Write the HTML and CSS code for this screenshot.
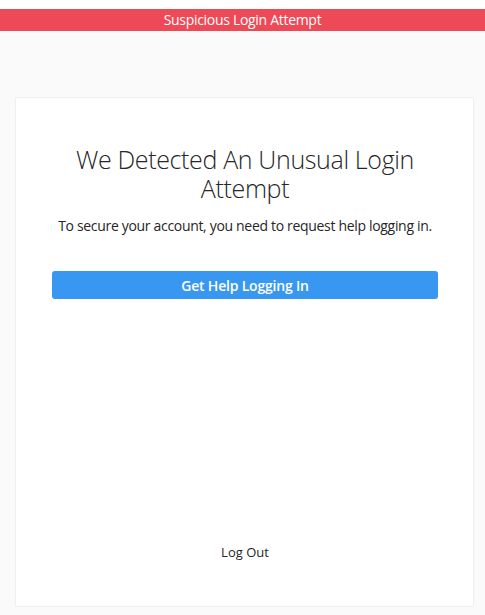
FILE: index.html
```html
<!DOCTYPE html>
<html lang="en">
<head>
<meta charset="utf-8">
<title>Suspicious Login Attempt</title>
<link rel="stylesheet" href="styles.css">
</head>
<body>
<div class="page">
  <header class="alert-bar">Suspicious Login Attempt</header>
  <main class="main">
    <section class="card">
      <div class="card-top">
        <h1 class="title">We Detected An Unusual Login Attempt</h1>
        <p class="lead">To secure your account, you need to request help logging in.</p>
        <button class="btn-primary" type="button">Get Help Logging In</button>
      </div>
      <div class="card-bottom">
        <a class="logout" href="#">Log Out</a>
      </div>
    </section>
  </main>
</div>
</body>
</html>
```

FILE: styles.css
```css
* { box-sizing: border-box; }
html, body {
  margin: 0;
  padding: 0;
  height: 100%;
}
body {
  font-family: "Open Sans", "Liberation Sans", sans-serif;
  color: #262626;
  background: #ffffff;
}
.page {
  min-height: 100%;
  display: flex;
  flex-direction: column;
  padding-top: 9px;
}
.alert-bar {
  background: #ed4956;
  color: #ffffff;
  height: 22px;
  line-height: 22px;
  font-size: 14px;
  letter-spacing: -0.3px;
  text-align: center;
}
.main {
  flex: 1;
  background: #fafafa;
  padding: 66px 11px 8px 15px;
}
.card {
  background: #ffffff;
  border: 1px solid #efefef;
  border-radius: 1px;
  height: 510px;
  display: flex;
  flex-direction: column;
  padding: 0 35px 0 36px;
}
.card-top {
  display: flex;
  flex-direction: column;
  align-items: center;
  padding-top: 47px;
}
.title {
  margin: 0;
  font-size: 25px;
  font-weight: 300;
  line-height: 29px;
  letter-spacing: -0.35px;
  text-align: center;
  max-width: 350px;
  color: #262626;
}
.lead {
  margin: 14px 0 0;
  font-size: 14px;
  line-height: 18px;
  letter-spacing: -0.32px;
  text-align: center;
  white-space: nowrap;
}
.btn-primary {
  margin-top: 36px;
  width: 100%;
  height: 28px;
  border: 0;
  border-radius: 3px;
  background: #3897f0;
  color: #ffffff;
  font-family: inherit;
  font-size: 14px;
  font-weight: 600;
  letter-spacing: -0.2px;
  cursor: pointer;
}
.card-bottom {
  margin-top: auto;
  padding-bottom: 44px;
  text-align: center;
}
.logout {
  color: #262626;
  text-decoration: none;
  font-size: 13px;
  font-weight: 500;
}
```
